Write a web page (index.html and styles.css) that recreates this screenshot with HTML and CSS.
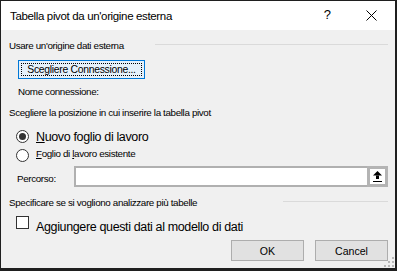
FILE: index.html
```html
<!DOCTYPE html>
<html>
<head>
	<title>Tabella pivot</title>
	<meta charset="utf-8">
	<link rel="stylesheet" href="styles.css">
</head>
<body>

	<div class="dialog">

		<div class="titlebar">
			<span class="title">Tabella pivot da un'origine esterna</span>
			<span class="help">?</span>
			<svg class="close" width="11" height="11" viewBox="0 0 11 11">
				<path d="M0.5 0.5 L10.5 10.5 M10.5 0.5 L0.5 10.5" stroke="#000" stroke-width="1" fill="none"/>
			</svg>
		</div>

		<div class="content">

			<div class="group-head first">
				<span>Usare un'origine dati esterna</span>
				<span class="rule rule-long"></span>
			</div>

			<button class="btn-focus"><span class="focus-ring">Scegliere Connessione...</span></button>

			<div class="label conn-name">Nome connessione:</div>

			<div class="label pos-head">Scegliere la posizione in cui inserire la tabella pivot</div>

			<div class="option big">
				<span class="radio checked"></span>
				<span class="option-text"><u>N</u>uovo foglio di lavoro</span>
			</div>

			<div class="option small">
				<span class="radio"></span>
				<span class="option-text"><u>F</u>oglio di <u>l</u>avoro esistente</span>
			</div>

			<div class="path-row">
				<span class="path-label">Percorso:</span>
				<div class="path-input"></div>
				<div class="path-btn">
					<svg width="9" height="11" viewBox="0 0 9 11">
						<path d="M4.5 0 L9 4.5 H0 Z" fill="#000"/>
						<rect x="3" y="4.5" width="3" height="3.5" fill="#000"/>
						<rect x="0" y="10" width="9" height="1" fill="#000"/>
					</svg>
				</div>
			</div>

			<div class="group-head second">
				<span>Specificare se si vogliono analizzare più tabelle</span>
				<span class="rule rule-short"></span>
			</div>

			<div class="option check">
				<span class="checkbox"></span>
				<span class="option-text">Aggiungere questi dati al modello di dati</span>
			</div>

			<div class="footer">
				<button class="btn">OK</button>
				<button class="btn">Cancel</button>
			</div>

		</div>

		<svg class="grip" width="10" height="10" viewBox="0 0 10 10">
			<rect x="8" y="0" width="2" height="2" fill="#b8b8b8"/>
			<rect x="4" y="4" width="2" height="2" fill="#b8b8b8"/>
			<rect x="8" y="4" width="2" height="2" fill="#b8b8b8"/>
			<rect x="0" y="8" width="2" height="2" fill="#b8b8b8"/>
			<rect x="4" y="8" width="2" height="2" fill="#b8b8b8"/>
			<rect x="8" y="8" width="2" height="2" fill="#b8b8b8"/>
		</svg>

	</div>

</body>
</html>
```

FILE: styles.css
```css
* {
	font-family: "Liberation Sans", Arial, sans-serif;
	box-sizing: border-box;
}

body {
	margin: 0;
	background: #fff;
}

.dialog {
	position: relative;
	width: 397px;
	height: 271px;
	background: #f0f0f0;
	border-top: 1px solid #1f1f1f;
	border-left: 1px solid #1f1f1f;
	border-right: 2px solid #1f1f1f;
	border-bottom: 3px solid #1f1f1f;
	color: #000;
}

/* title bar */

.titlebar {
	display: flex;
	align-items: flex-start;
	height: 29px;
	background: #fff;
}

.title {
	margin: 8px 0 0 9px;
	font-size: 11.5px;
	line-height: 14px;
	letter-spacing: -0.35px;
}

.help {
	margin: 7px 0 0 auto;
	font-size: 13px;
	line-height: 14px;
}

.close {
	margin: 9px 18px 0 35px;
}

/* body */

.content {
	display: flex;
	flex-direction: column;
	align-items: flex-start;
	padding: 0 7px 0 8px;
	font-size: 9.8px;
	letter-spacing: -0.35px;
}

.group-head {
	display: flex;
	align-items: flex-start;
	align-self: stretch;
	height: 14px;
	line-height: 14px;
}

.group-head.first {
	margin-top: 9px;
}

.group-head.second {
	margin-top: 9px;
}

.rule {
	margin: 5px 0 0 auto;
	border-top: 1px solid #dadada;
}

.rule-long {
	width: 233px;
}

.rule-short {
	width: 105px;
}

.btn-focus {
	display: flex;
	margin: 7px 0 0 9px;
	padding: 2px;
	width: 127px;
	height: 19px;
	background: #e5f1fb;
	border: 1px solid #0078d7;
}

.focus-ring {
	flex: 1;
	border: 1px dotted #000;
	font-size: 10.4px;
	letter-spacing: -0.3px;
	line-height: 11px;
	text-align: center;
	color: #000;
}

.label {
	line-height: 14px;
}

.conn-name {
	margin: 6px 0 0 9px;
}

.pos-head {
	margin-top: 7px;
}

/* options */

.option {
	display: flex;
	align-items: flex-start;
}

.option-text {
	margin-left: 7px;
}

.option.big {
	margin-top: 7px;
	height: 18px;
}

.option.big .radio {
	margin: 2.5px 0 0 7px;
}

.option.big .option-text {
	margin-top: 1px;
	font-size: 12.5px;
	letter-spacing: -0.36px;
	line-height: 18px;
}

.option.small {
	margin-top: 3px;
	height: 14px;
}

.option.small .radio {
	margin: 0.5px 0 0 7px;
}

.option.small .option-text {
	margin-top: -1.5px;
	line-height: 14px;
}

.radio {
	position: relative;
	width: 13px;
	height: 13px;
	border: 1px solid #333;
	border-radius: 50%;
	background: #fff;
}

.radio.checked::after {
	content: "";
	position: absolute;
	left: 2px;
	top: 2px;
	width: 7px;
	height: 7px;
	border-radius: 50%;
	background: #333;
}

.checkbox {
	margin-left: 7px;
	width: 13px;
	height: 13px;
	border: 1px solid #333;
	background: #fff;
}

.option.check {
	margin-top: 6px;
	height: 18px;
}

.option.check .option-text {
	margin-top: 1.5px;
	font-size: 12.5px;
	letter-spacing: -0.36px;
	line-height: 18px;
}

/* percorso */

.path-row {
	display: flex;
	align-items: flex-start;
	align-self: stretch;
	margin-top: 4px;
	height: 21px;
}

.path-label {
	margin: 6px 0 0 8px;
	width: 57px;
	line-height: 14px;
}

.path-input {
	flex: 1;
	height: 21px;
	background: #fff;
	border: 2px solid #b0b0b0;
	border-right: 0;
}

.path-btn {
	display: flex;
	align-items: center;
	justify-content: center;
	width: 21px;
	height: 21px;
	background: #fff;
	border: 3px solid #b4b4b4;
}

/* footer */

.footer {
	display: flex;
	justify-content: flex-end;
	gap: 11px;
	align-self: stretch;
	margin-top: 6px;
}

.btn {
	width: 73px;
	height: 21px;
	padding: 0;
	background: #e1e1e1;
	border: 1px solid #adadad;
	font-size: 10.6px;
	color: #000;
}

.grip {
	position: absolute;
	right: 1px;
	bottom: 1px;
}
```
